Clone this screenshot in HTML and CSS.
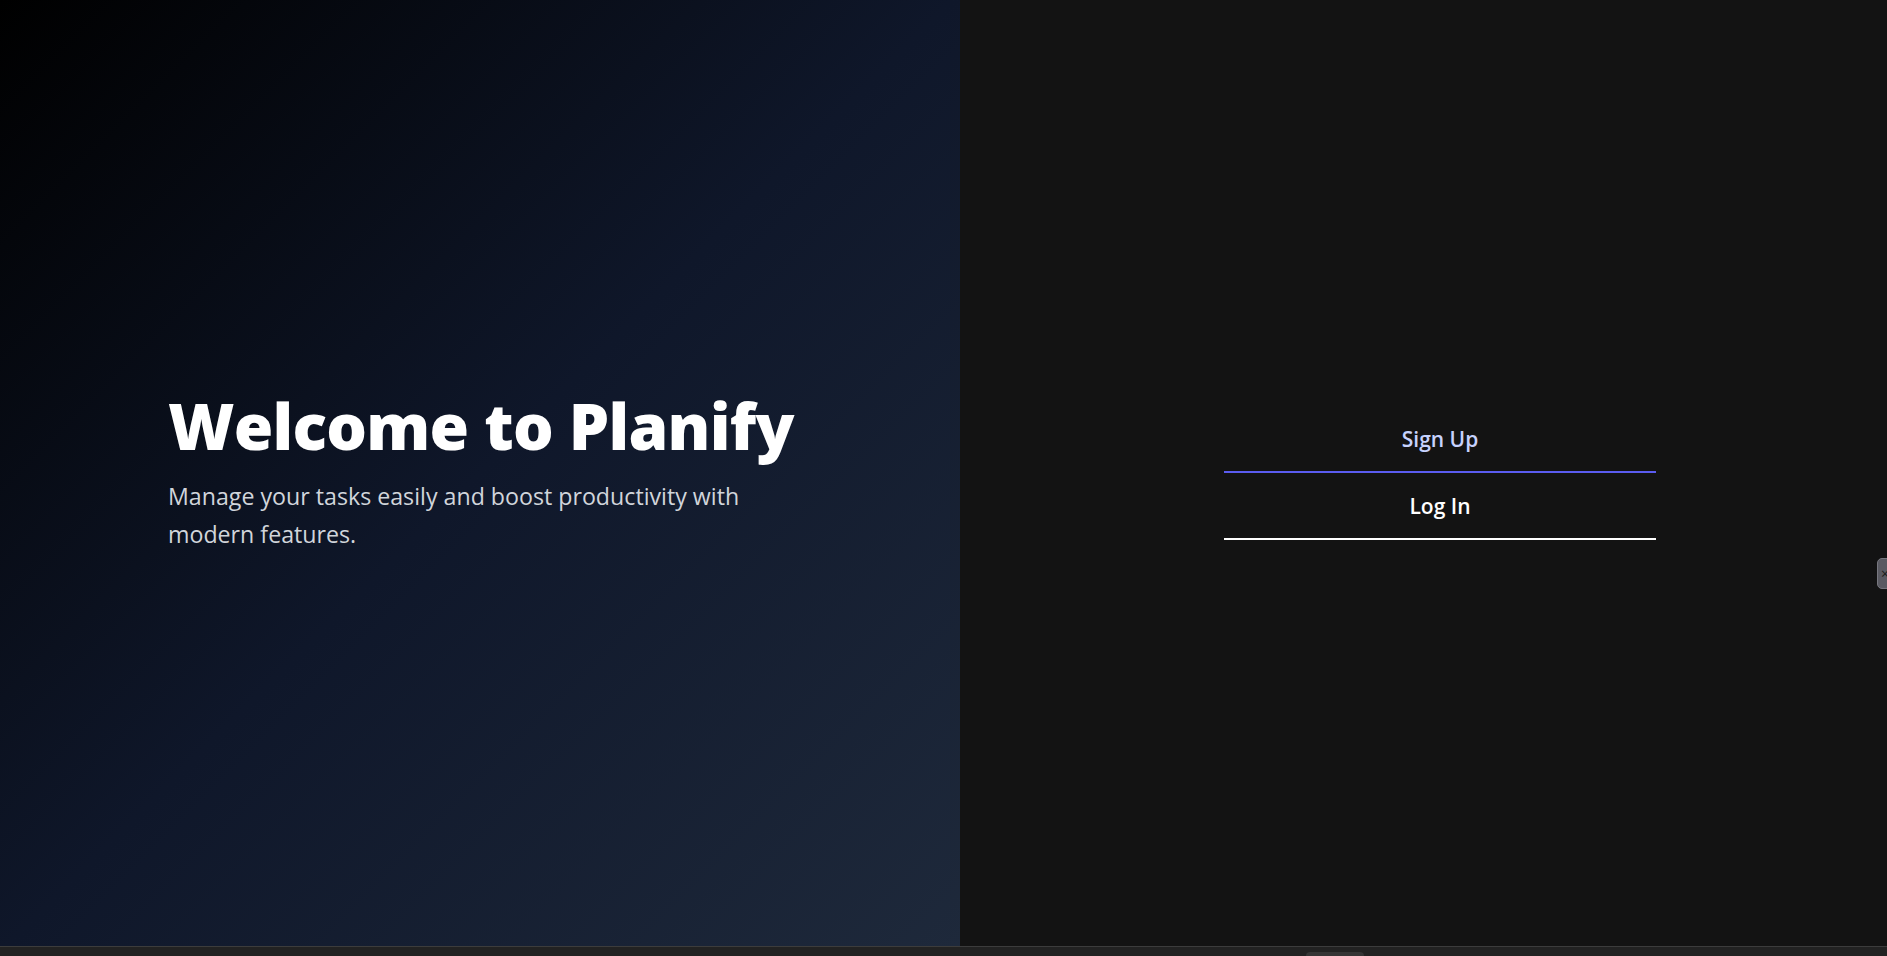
FILE: index.html
```html
<!DOCTYPE html>
<html lang="en">
<head>
<meta charset="utf-8">
<title>Planify</title>
<link rel="stylesheet" href="styles.css">
</head>
<body>
<div class="page">
  <section class="hero">
    <div class="hero-content">
      <h1 class="hero-title">Welcome to Planify</h1>
      <p class="hero-text">Manage your tasks easily and boost productivity with modern features.</p>
    </div>
  </section>
  <section class="auth">
    <div class="auth-tabs">
      <button class="tab tab-active" type="button">Sign Up</button>
      <button class="tab" type="button">Log In</button>
    </div>
  </section>
</div>
<div class="bottom-bar"><span class="bar-handle"></span></div>
<div class="edge-tab">×</div>
</body>
</html>
```

FILE: styles.css
```css
html, body {
  margin: 0;
  padding: 0;
}
body {
  width: 1887px;
  height: 956px;
  overflow: hidden;
  background: #202020;
  font-family: "Open Sans", "Noto Sans", sans-serif;
  position: relative;
}
.page {
  display: grid;
  grid-template-columns: 960px 960px;
  height: 946px;
}
.hero {
  background: linear-gradient(135deg, #000000 0%, #0f172a 50%, #1e293b 100%);
  display: flex;
  align-items: center;
  justify-content: center;
}
.hero-content {
  width: 624px;
  margin-top: -4px;
}
.hero-title {
  margin: 0;
  font-family: "Open Sans", sans-serif;
  font-weight: 800;
  font-size: 64px;
  line-height: 1.15;
  letter-spacing: -0.75px;
  color: #ffffff;
  white-space: nowrap;
}
.hero-text {
  margin: 16px 0 0;
  font-size: 23.2px;
  line-height: 37.5px;
  color: #d1d5db;
}
.auth {
  background: #131313;
  display: flex;
  align-items: center;
  justify-content: center;
}
.auth-tabs {
  width: 432px;
  display: flex;
  flex-direction: column;
}
.tab {
  height: 67px;
  box-sizing: border-box;
  background: transparent;
  border: 0;
  border-bottom: 2px solid #ffffff;
  color: #ffffff;
  font-family: "Open Sans", "Noto Sans", sans-serif;
  font-weight: 600;
  font-size: 21px;
  padding: 0;
  cursor: pointer;
}
.tab-active {
  color: #c7d2fe;
  border-bottom-color: #5b5cf0;
}
.bottom-bar {
  height: 10px;
  box-sizing: border-box;
  border-top: 1px solid #3c3c3c;
  background: #222222;
  display: flex;
  justify-content: flex-start;
  padding-left: 1306px;
  align-items: flex-end;
}
.bar-handle {
  width: 58px;
  height: 4px;
  background: #353535;
  border-radius: 6px 6px 0 0;
}
.edge-tab {
  position: absolute;
  left: 1877px;
  top: 558px;
  width: 24px;
  height: 31px;
  box-sizing: border-box;
  background: #5a5a62;
  border: 1px solid #77777f;
  border-radius: 5px;
  color: #1a1a1a;
  font-size: 14px;
  line-height: 29px;
  padding-left: 3px;
}
```
